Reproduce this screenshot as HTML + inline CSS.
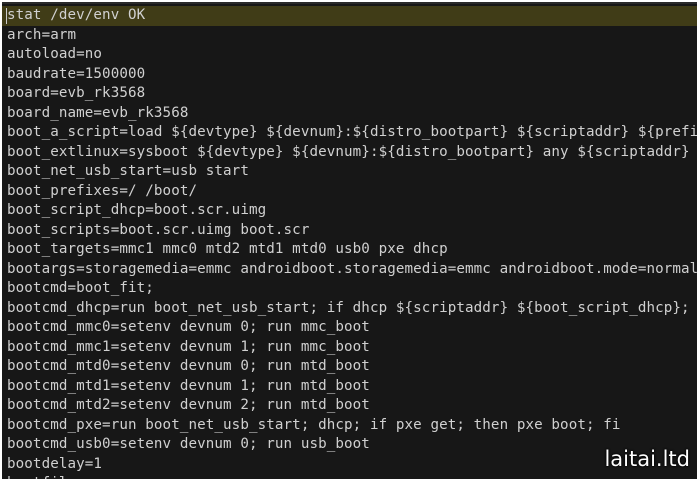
<!DOCTYPE html>
<html><head><style>
html,body{margin:0;padding:0;width:698px;height:479px;overflow:hidden;background:#fff}
.t{position:absolute;left:2px;top:2px;width:695px;height:477px;background:#171717;border-top:2px solid #2a2a2a;box-sizing:border-box;overflow:hidden}
.hl{position:absolute;left:0;top:2px;width:100%;height:20px;background:#403c17}
.cur{position:absolute;left:4px;top:4px;width:1px;height:16px;background:#ccc}
pre{position:absolute;left:5px;top:2px;margin:0;font-family:"DejaVu Sans Mono","Liberation Mono",monospace;font-size:14.2px;letter-spacing:0.1px;line-height:19.5px;color:#d0d0d0;white-space:pre}
.wm{position:absolute;right:8px;top:447px;font-family:"DejaVu Sans",sans-serif;font-size:21px;color:#fff;text-shadow:0 0 2px #000,0 0 2px #000}
</style></head><body>
<div class="t"><div class="hl"></div><div class="cur"></div>
<pre>stat /dev/env OK
arch=arm
autoload=no
baudrate=1500000
board=evb_rk3568
board_name=evb_rk3568
boot_a_script=load ${devtype} ${devnum}:${distro_bootpart} ${scriptaddr} ${prefix}
boot_extlinux=sysboot ${devtype} ${devnum}:${distro_bootpart} any ${scriptaddr} ${p
boot_net_usb_start=usb start
boot_prefixes=/ /boot/
boot_script_dhcp=boot.scr.uimg
boot_scripts=boot.scr.uimg boot.scr
boot_targets=mmc1 mmc0 mtd2 mtd1 mtd0 usb0 pxe dhcp
bootargs=storagemedia=emmc androidboot.storagemedia=emmc androidboot.mode=normal
bootcmd=boot_fit;
bootcmd_dhcp=run boot_net_usb_start; if dhcp ${scriptaddr} ${boot_script_dhcp}; th
bootcmd_mmc0=setenv devnum 0; run mmc_boot
bootcmd_mmc1=setenv devnum 1; run mmc_boot
bootcmd_mtd0=setenv devnum 0; run mtd_boot
bootcmd_mtd1=setenv devnum 1; run mtd_boot
bootcmd_mtd2=setenv devnum 2; run mtd_boot
bootcmd_pxe=run boot_net_usb_start; dhcp; if pxe get; then pxe boot; fi
bootcmd_usb0=setenv devnum 0; run usb_boot
bootdelay=1
bootfile=</pre>
</div>
<div class="wm">laitai.ltd</div>
</body></html>
